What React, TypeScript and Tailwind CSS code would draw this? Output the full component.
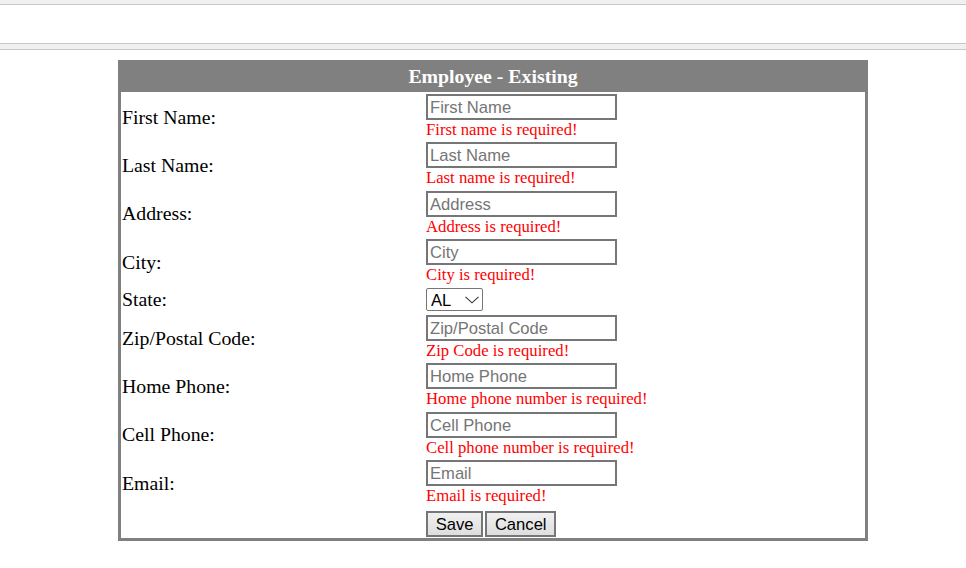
import React from "react";

const fields = [
  { label: "First Name:", ph: "First Name", err: "First name is required!" },
  { label: "Last Name:", ph: "Last Name", err: "Last name is required!" },
  { label: "Address:", ph: "Address", err: "Address is required!" },
  { label: "City:", ph: "City", err: "City is required!" },
];
const fields2 = [
  { label: "Zip/Postal Code:", ph: "Zip/Postal Code", err: "Zip Code is required!" },
  { label: "Home Phone:", ph: "Home Phone", err: "Home phone number is required!" },
  { label: "Cell Phone:", ph: "Cell Phone", err: "Cell phone number is required!" },
  { label: "Email:", ph: "Email", err: "Email is required!" },
];

function FieldRow({ label, ph, err }: { label: string; ph: string; err: string }) {
  return (
    <div className="flex h-[48.33px]">
      <div className="w-[304px] pl-[1px] pt-[3px] flex items-center text-[19.8px] text-black">{label}</div>
      <div className="pl-[1px] pt-[2px] flex flex-col">
        <input
          placeholder={ph}
          className="w-[191px] h-[26px] border-2 border-[#767676] bg-white px-[2px] pt-[2px] pb-0 text-[16.6px] leading-[20px] font-['Liberation_Sans',Arial,sans-serif] text-black placeholder:text-[#757575] outline-none"
        />
        <div className="text-[16.7px] leading-[19px] text-[#ff0000] whitespace-nowrap">{err}</div>
      </div>
    </div>
  );
}

export default function App() {
  return (
    <div className="min-h-[568px] bg-white font-['Liberation_Serif','Times_New_Roman',serif]">
      <div className="h-[4px] bg-[#f0f0f0]" />
      <div className="h-[1px] bg-[#c8c8c8]" />
      <div className="h-[38px] bg-white" />
      <div className="h-[1px] bg-[#c8c8c8]" />
      <div className="h-[5px] bg-[#f0f0f0]" />
      <div className="h-[1px] bg-[#c8c8c8]" />
      <div className="h-[10px]" />
      <div className="ml-[118px] w-[750px] border-[3px] border-[#808080] bg-white">
        <div className="h-[29px] pb-[2px] bg-[#808080] flex items-center justify-center text-white font-bold text-[19.8px] leading-none">
          Employee - Existing
        </div>
        {fields.map((f) => (
          <FieldRow key={f.label} {...f} />
        ))}
        <div className="flex h-[27.7px]">
          <div className="w-[304px] pl-[1px] pt-[2px] flex items-center text-[19.8px] text-black">State:</div>
          <div className="pl-[1px] flex items-center">
            <div className="relative w-[57px] h-[23px]">
              <select className="appearance-none w-full h-full border border-[#767676] rounded-[2px] bg-white pl-[4px] text-[16.6px] font-['Liberation_Sans',Arial,sans-serif] text-black outline-none">
                <option>AL</option>
              </select>
              <svg
                className="absolute left-[39px] top-[8px] pointer-events-none"
                width="14"
                height="8"
                viewBox="0 0 14 8"
                fill="none"
              >
                <path d="M0.5 0.8 L7 6.8 L13.5 0.8" stroke="#333" strokeWidth="1.1" />
              </svg>
            </div>
          </div>
        </div>
        {fields2.map((f) => (
          <FieldRow key={f.label} {...f} />
        ))}
        <div className="flex h-[32px]">
          <div className="w-[304px]" />
          <div className="pl-[1px] pt-[5px] flex gap-[2px]">
            <button className="h-[26px] border-2 border-[#767676] bg-gradient-to-b from-[#f0f0f0] to-[#dedede] px-[7.7px] pt-[2px] text-[16.6px] font-['Liberation_Sans',Arial,sans-serif] text-black leading-none">
              Save
            </button>
            <button className="h-[26px] border-2 border-[#767676] bg-gradient-to-b from-[#f0f0f0] to-[#dedede] px-[7.7px] pt-[2px] text-[16.6px] font-['Liberation_Sans',Arial,sans-serif] text-black leading-none">
              Cancel
            </button>
          </div>
        </div>
      </div>
    </div>
  );
}
